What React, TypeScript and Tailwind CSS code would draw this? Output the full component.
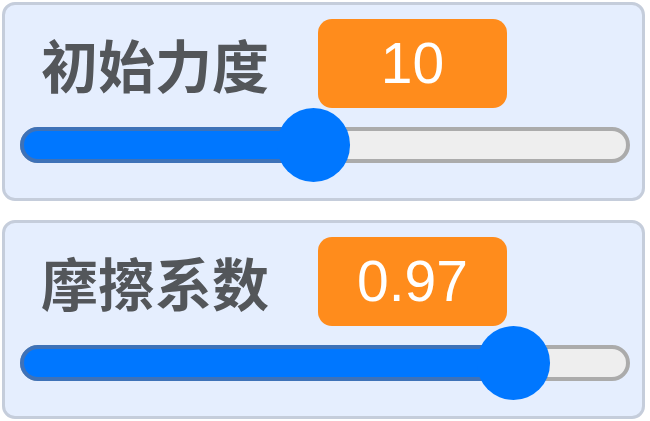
import React from "react";

type SliderCardProps = {
  label: string;
  value: string;
  offset: number; // thumb centre, px from the track's left edge
};

function SliderCard({ label, value, offset }: SliderCardProps) {
  return (
    <div className="w-[643px] h-[199px] rounded-[13px] border-[3px] border-[#c5cddb] bg-[#e5eefe] pt-[14px]">
      <div className="flex items-center h-[89px]">
        <div
          className="ml-[36px] w-[277px] text-[57px] font-bold leading-none text-[#53565a]"
          style={{ fontFamily: '"Noto Sans CJK SC", "Noto Sans", sans-serif' }}
        >
          {label}
        </div>
        <div
          className="flex h-[89px] w-[189px] items-center justify-center rounded-[14px] bg-[#ff8c1c] text-[57px] leading-none text-white"
          style={{ fontFamily: '"Liberation Sans", Arial, sans-serif' }}
        >
          {value}
        </div>
      </div>
      <div className="relative ml-[15px] mt-[19px] h-[36px] w-[610px]">
        <div className="absolute inset-0 rounded-full border-4 border-[#ababab] bg-[#eeeeee]" />
        <div
          className="absolute left-0 top-0 h-[36px] rounded-full border-4 border-[#3e72b8] bg-[#0077ff]"
          style={{ width: offset + 10 }}
        />
        <div
          className="absolute top-[-19px] h-[74px] w-[73px] rounded-full bg-[#0077ff]"
          style={{ left: offset - 36 }}
        />
      </div>
    </div>
  );
}

export default function App() {
  return (
    <div className="flex w-[650px] h-[421px] flex-col gap-[19px] bg-white pl-[2px] pt-[2px]">
      <SliderCard label="初始力度" value="10" offset={293} />
      <SliderCard label="摩擦系数" value="0.97" offset={493} />
    </div>
  );
}
